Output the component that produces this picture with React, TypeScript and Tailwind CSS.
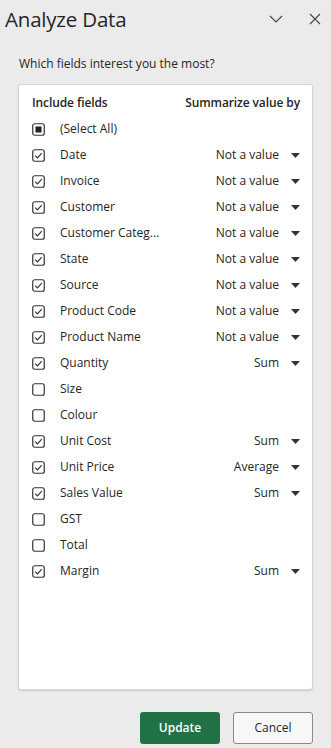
import React from 'react';

const rows: { name: string; checked: boolean; value?: string }[] = [
  { name: 'Date', checked: true, value: 'Not a value' },
  { name: 'Invoice', checked: true, value: 'Not a value' },
  { name: 'Customer', checked: true, value: 'Not a value' },
  { name: 'Customer Categ...', checked: true, value: 'Not a value' },
  { name: 'State', checked: true, value: 'Not a value' },
  { name: 'Source', checked: true, value: 'Not a value' },
  { name: 'Product Code', checked: true, value: 'Not a value' },
  { name: 'Product Name', checked: true, value: 'Not a value' },
  { name: 'Quantity', checked: true, value: 'Sum' },
  { name: 'Size', checked: false },
  { name: 'Colour', checked: false },
  { name: 'Unit Cost', checked: true, value: 'Sum' },
  { name: 'Unit Price', checked: true, value: 'Average' },
  { name: 'Sales Value', checked: true, value: 'Sum' },
  { name: 'GST', checked: false },
  { name: 'Total', checked: false },
  { name: 'Margin', checked: true, value: 'Sum' },
];

function Box({ state }: { state: 'on' | 'off' | 'mixed' }) {
  return (
    <svg width="13" height="13" viewBox="0 0 13 13" className="shrink-0">
      <rect x="0.75" y="0.75" width="11.5" height="11.5" rx="2" fill="white" stroke="#333" strokeWidth="1.2" />
      {state === 'on' && <path d="M3.2 6.6 L5.4 8.8 L9.8 4.2" fill="none" stroke="#333" strokeWidth="1.2" />}
      {state === 'mixed' && <rect x="3.5" y="3.5" width="6" height="6" fill="#222" />}
    </svg>
  );
}

function Caret() {
  return (
    <svg width="9" height="5" viewBox="0 0 9 5" className="shrink-0">
      <path d="M0 0 H9 L4.5 5 Z" fill="#333" />
    </svg>
  );
}

export default function App() {
  return (
    <div className="w-[331px] h-[748px] bg-[#ebebeb] flex flex-col text-[#262626]" style={{ fontFamily: '"Open Sans", "Noto Sans", sans-serif' }}>
      {/* title bar */}
      <div className="flex items-center h-[38px] pl-[5px] pr-[10px]">
        <div className="text-[20.5px] leading-none flex-1 tracking-[-0.2px]">Analyze Data</div>
        <svg width="14" height="8" viewBox="0 0 14 8" className="mr-[26px]">
          <path d="M1 1 L7 7 L13 1" fill="none" stroke="#444" strokeWidth="1.1" />
        </svg>
        <svg width="12" height="12" viewBox="0 0 12 12">
          <path d="M1 1 L11 11 M11 1 L1 11" fill="none" stroke="#444" strokeWidth="1.1" />
        </svg>
      </div>

      <div className="pl-[19px] mt-[20px] text-[12px] leading-none">Which fields interest you the most?</div>

      {/* panel */}
      <div className="mx-[18px] mt-[14px] h-[606px] bg-white rounded-[3px] border border-[#d4d4d4] shadow-[0_1px_2px_rgba(0,0,0,0.12)] flex flex-col pt-[10px]">
        <div className="flex items-center h-[16px] pl-[13px] pr-[12px] text-[12px] font-semibold tracking-[-0.1px]">
          <div className="flex-1">Include fields</div>
          <div>Summarize value by</div>
        </div>
        <div className="flex items-center h-[26px] mt-[5px] pl-[13px] text-[12px]">
          <Box state="mixed" />
          <span className="ml-[15px]">(Select All)</span>
        </div>
        {rows.map((r) => (
          <div key={r.name} className="flex items-center h-[26px] pl-[13px] pr-[12px] text-[12px]">
            <Box state={r.checked ? 'on' : 'off'} />
            <span className="ml-[15px] flex-1">{r.name}</span>
            {r.value && (
              <span className="flex items-center gap-[12px]">
                <span>{r.value}</span>
                <Caret />
              </span>
            )}
          </div>
        ))}
      </div>

      {/* buttons */}
      <div className="flex justify-end gap-[13px] mt-[22px] pr-[18px]">
        <button className="w-[80px] h-[32px] rounded-[3px] bg-[#217346] text-white text-[12px] font-semibold">Update</button>
        <button className="w-[80px] h-[32px] rounded-[3px] bg-[#f7f7f7] border border-[#8a8a8a] text-[12px]">Cancel</button>
      </div>
    </div>
  );
}
